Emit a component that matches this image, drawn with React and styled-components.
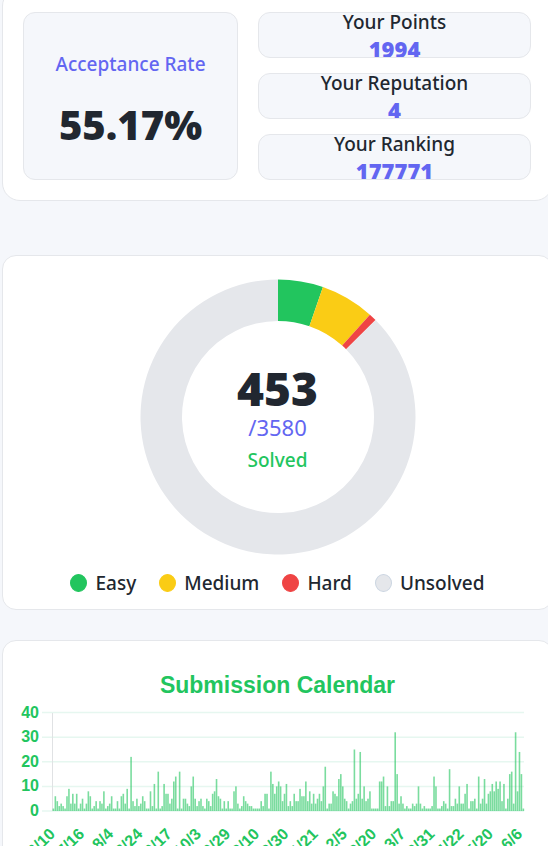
import React from "react";
import styled, { createGlobalStyle } from "styled-components";

const GlobalStyle = createGlobalStyle`
  *, *::before, *::after { box-sizing: border-box; }
  body { margin: 0; background: #f5f7fb; font-family: "Noto Sans", "Open Sans", sans-serif; color: #212730; overflow-x: hidden; }
  p, h2, ul { margin: 0; padding: 0; }
`;

const Page = styled.main`
  display: flex;
  flex-direction: column;
  min-width: 0;
  height: 100vh;
  overflow: hidden;
  padding-left: 2px;
`;

const Card = styled.section`
  flex: none;
  background: #fff;
  border: 1px solid #e5e7eb;
  border-radius: ${(p) => p.$radius || 14}px;
  margin-right: -5px;
  margin-bottom: ${(p) => p.$gap || 0}px;
`;

const StatsCard = styled(Card)`
  display: grid;
  grid-template-columns: 215fr 273fr;
  gap: 20px;
  margin-top: -12px;
  padding: 23px 21px 20px 20px;
`;

const Tile = styled.div`
  display: flex;
  flex-direction: column;
  align-items: center;
  background: #f5f7fb;
  border: 1px solid #e5e7eb;
  border-radius: 12px;
  overflow: hidden;
`;

const RateTile = styled(Tile)`
  justify-content: center;
  gap: 20px;
  padding-top: 10px;
`;

const TileStack = styled.div`
  display: grid;
  grid-template-rows: repeat(3, 46px);
  gap: 15px;
`;

const RateLabel = styled.p`
  font-size: 19px;
  line-height: 28px;
  font-weight: 500;
  color: #6366f1;
`;

const RateValue = styled.p`
  font-size: 40px;
  line-height: 54px;
  font-weight: 900;
`;

const TileLabel = styled.p`
  font-size: 19px;
  line-height: 19px;
  font-weight: 500;
`;

const TileValue = styled.p`
  font-size: 22px;
  line-height: 34px;
  font-weight: 900;
  color: #6366f1;
`;

const SolvedCard = styled(Card)`
  display: flex;
  flex-direction: column;
  align-items: center;
  padding: 23px 0 12px;
`;

const DonutWrap = styled.div`
  display: grid;
  place-items: center;
  > * { grid-area: 1 / 1; }
`;

const DonutText = styled.div`
  padding-top: 8px;
  text-align: center;
`;

const SolvedCount = styled.p`
  font-size: 46px;
  line-height: 48px;
  font-weight: 900;
`;

const SolvedTotal = styled.p`
  font-size: 22px;
  line-height: 30px;
  color: #6366f1;
`;

const SolvedLabel = styled.p`
  font-size: 19px;
  line-height: 36px;
  font-weight: 500;
  color: #22c55e;
`;

const Legend = styled.ul`
  display: flex;
  gap: 23px;
  list-style: none;
  margin-top: 14px;
`;

const LegendItem = styled.li`
  display: flex;
  align-items: center;
  gap: 8px;
  font-size: 19px;
  line-height: 28px;
  font-weight: 500;
`;

const Dot = styled.span`
  width: 17px;
  height: 18px;
  border-radius: 50%;
  background: ${(p) => p.$color};
  border: 1px solid ${(p) => p.$edge || p.$color};
`;

const CalendarCard = styled(Card)`
  padding: 28px 0 0;
  font-family: "Liberation Sans", Arial, sans-serif;
  font-weight: 700;
  color: #22c55e;
`;

const CalendarTitle = styled.h2`
  font-size: 23px;
  line-height: 32px;
  text-align: center;
`;

const Chart = styled.svg`
  display: block;
  width: 100%;
  height: auto;
  overflow: visible;
  font-size: 16px;
  fill: #22c55e;
`;

const point = (r, share) => {
  const a = share * 2 * Math.PI;
  return `${138 + r * Math.sin(a)} ${138 - r * Math.cos(a)}`;
};

const arc = (from, to) => {
  const large = to - from > 0.5 ? 1 : 0;
  return `M${point(137.5, from)}A137.5 137.5 0 ${large} 1 ${point(137.5, to)}L${point(96, to)}A96 96 0 ${large} 0 ${point(96, from)}Z`;
};

const slices = [
  { name: "Easy", color: "#22c55e", from: 0, to: 0.053 },
  { name: "Medium", color: "#facc15", from: 0.053, to: 0.1165 },
  { name: "Hard", color: "#ef4444", from: 0.1165, to: 0.1255 },
  { name: "Unsolved", color: "#e5e7eb", edge: "#cbd5e1", from: 0.1255, to: 1 },
];

const stats = [
  ["Your Points", "1994"],
  ["Your Reputation", "4"],
  ["Your Ranking", "177771"],
];

const ticks = ["6/10", "7/16", "8/4", "8/24", "9/17", "10/3", "10/29", "12/10", "12/30", "1/21", "2/5", "2/20", "3/7", "3/31", "4/22", "5/20", "6/6"];

const counts = [
  1, 6, 4, 2, 3, 2, 1, 6, 9, 3, 7, 3, 7, 1, 3, 5, 1, 3, 8, 6,
  1, 2, 4, 1, 4, 3, 8, 1, 2, 3, 6, 1, 1, 4, 1, 6, 7, 3, 9, 1,
  22, 4, 2, 5, 2, 3, 6, 4, 1, 1, 8, 2, 11, 1, 16, 1, 2, 11, 7, 7,
  3, 5, 12, 14, 1, 16, 1, 5, 5, 3, 2, 10, 14, 5, 2, 4, 5, 2, 1, 5,
  4, 2, 7, 8, 13, 6, 5, 1, 4, 1, 4, 1, 1, 8, 10, 3, 1, 2, 6, 4,
  3, 2, 2, 1, 1, 1, 1, 4, 2, 7, 7, 1, 16, 11, 7, 10, 12, 10, 4, 7,
  11, 2, 4, 2, 7, 4, 4, 9, 6, 6, 12, 4, 8, 3, 7, 3, 5, 7, 4, 10,
  18, 1, 3, 3, 8, 7, 6, 13, 15, 10, 5, 4, 1, 3, 4, 25, 5, 7, 24, 5,
  10, 4, 5, 8, 1, 1, 1, 1, 12, 12, 14, 2, 10, 2, 4, 4, 32, 15, 3, 6,
  3, 1, 2, 1, 1, 3, 2, 3, 10, 3, 1, 2, 1, 1, 1, 2, 14, 10, 1, 1,
  2, 4, 3, 1, 17, 2, 2, 5, 3, 10, 3, 3, 7, 11, 1, 4, 4, 5, 1, 14,
  3, 5, 13, 3, 7, 8, 11, 8, 12, 9, 12, 4, 11, 1, 5, 15, 16, 3, 32, 8,
  24, 15, 1,
];

export default function App() {
  return (
    <>
      <GlobalStyle />
      <Page>
        <StatsCard $radius={18} $gap={54}>
          <RateTile>
            <RateLabel>Acceptance Rate</RateLabel>
            <RateValue>55.17%</RateValue>
          </RateTile>
          <TileStack>
            {stats.map(([label, value]) => (
              <Tile key={label}>
                <TileLabel>{label}</TileLabel>
                <TileValue>{value}</TileValue>
              </Tile>
            ))}
          </TileStack>
        </StatsCard>

        <SolvedCard $gap={30}>
          <DonutWrap>
            <svg width="276" height="276" viewBox="0 0 276 276" aria-hidden="true">
              {slices.map((s) => (
                <path key={s.name} d={arc(s.from, s.to)} fill={s.color} />
              ))}
            </svg>
            <DonutText>
              <SolvedCount>453</SolvedCount>
              <SolvedTotal>/3580</SolvedTotal>
              <SolvedLabel>Solved</SolvedLabel>
            </DonutText>
          </DonutWrap>
          <Legend>
            {slices.map((s) => (
              <LegendItem key={s.name}>
                <Dot $color={s.color} $edge={s.edge} />
                {s.name}
              </LegendItem>
            ))}
          </Legend>
        </SolvedCard>

        <CalendarCard>
          <CalendarTitle>Submission Calendar</CalendarTitle>
          <Chart viewBox="3 701 549 180" role="img" aria-label="Submissions per day">
            {[0, 10, 20, 30, 40].map((v) => (
              <g key={v}>
                <path d={`M42 ${811 - v * 2.46}H524`} stroke="#e6f7f0" strokeWidth="1.5" />
                <text x="39" y={816 - v * 2.46} textAnchor="end">{v}</text>
              </g>
            ))}
            <path d="M52.5 713V811" stroke="#e0e2e4" />
            {counts.map((c, i) => (
              <rect key={i} x={52.6 + i * 1.942} y={811 - c * 2.46} width="1.6" height={c * 2.46} fill="#22c55e" fillOpacity="0.6" />
            ))}
            {ticks.map((t, i) => (
              <text key={i} textAnchor="end" transform={`translate(${56 + i * 29.2} 835) rotate(-45)`}>{t}</text>
            ))}
          </Chart>
        </CalendarCard>
      </Page>
    </>
  );
}
